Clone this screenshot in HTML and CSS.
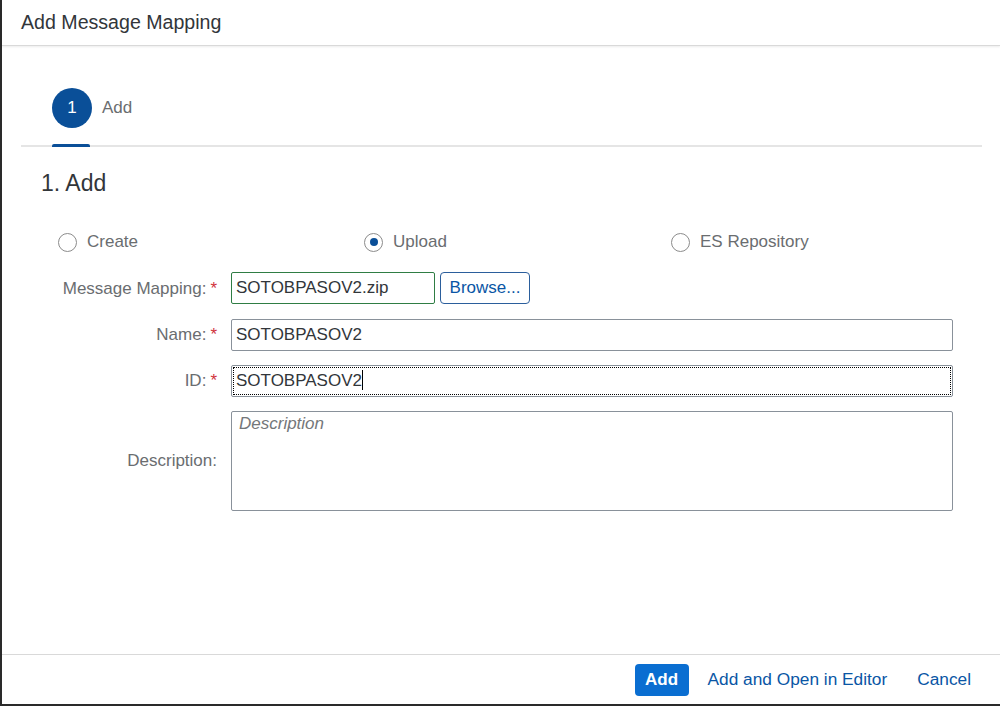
FILE: index.html
```html
<!DOCTYPE html>
<html>
<head>
<meta charset="utf-8">
<link rel="stylesheet" href="styles.css">
</head>
<body>
<div class="dialog">
  <header class="dlg-header">Add Message Mapping</header>
  <div class="dlg-content">
    <nav class="wizard-nav">
      <div class="step">
        <div class="step-top">
          <span class="step-circle">1</span>
          <span class="step-label">Add</span>
        </div>
        <span class="step-bar"></span>
      </div>
    </nav>
    <h2 class="step-title">1. Add</h2>
    <div class="radios">
      <label class="radio"><span class="rb"></span>Create</label>
      <label class="radio"><span class="rb checked"></span>Upload</label>
      <label class="radio"><span class="rb"></span>ES Repository</label>
    </div>
    <div class="form">
      <div class="lbl">Message Mapping:<span class="req">*</span></div>
      <div class="field file-row">
        <div class="input file-input">SOTOBPASOV2.zip</div>
        <button class="browse">Browse...</button>
      </div>
      <div class="lbl">Name:<span class="req">*</span></div>
      <div class="field"><div class="input">SOTOBPASOV2</div></div>
      <div class="lbl">ID:<span class="req">*</span></div>
      <div class="field"><div class="input focused">SOTOBPASOV2<span class="caret"></span></div></div>
      <div class="lbl lbl-desc">Description:</div>
      <div class="field"><div class="textarea">Description</div></div>
    </div>
  </div>
  <footer class="dlg-footer">
    <button class="btn-emph">Add</button>
    <button class="btn-link">Add and Open in Editor</button>
    <button class="btn-link">Cancel</button>
  </footer>
</div>
</body>
</html>
```
FILE: styles.css
```css
html, body {
  margin: 0;
  padding: 0;
}
body {
  background: #2a2a2a;
  width: 1000px;
  height: 706px;
  overflow: hidden;
  font-family: "Liberation Sans", Arial, sans-serif;
  color: #32363a;
}
.dialog {
  margin-left: 2px;
  width: 998px;
  height: 704px;
  background: #fff;
  display: flex;
  flex-direction: column;
}
.dlg-header {
  height: 45px;
  flex: none;
  padding-left: 19px;
  font-size: 19.6px;
  line-height: 44px;
  color: #32363a;
  border-bottom: 1px solid #d9d9d9;
  box-shadow: 0 1px 2px rgba(0,0,0,0.08);
}
.dlg-content {
  flex: 1;
  padding: 0 18px 0 19px;
}
.wizard-nav {
  height: 99px;
  border-bottom: 2px solid #e5e5e5;
  display: flex;
  align-items: flex-end;
}
.step {
  margin-left: 31px;
  display: flex;
  flex-direction: column;
}
.step-top {
  display: flex;
  align-items: center;
  gap: 10px;
}
.step-circle {
  width: 40px;
  height: 40px;
  border-radius: 50%;
  background: #0a4f98;
  color: #fff;
  font-size: 17px;
  display: flex;
  align-items: center;
  justify-content: center;
}
.step-label {
  font-size: 17px;
  color: #6a6d70;
}
.step-bar {
  margin-top: 16px;
  width: 38px;
  height: 3px;
  background: #0a4f98;
  border-radius: 2px 2px 0 0;
  margin-bottom: -2px;
}
.step-title {
  margin: 22px 0 0 20px;
  font-weight: normal;
  font-size: 23px;
  line-height: 28px;
  color: #32363a;
}
.radios {
  display: grid;
  grid-template-columns: 306px 307px auto;
  margin: 32px 0 0 37px;
  height: 26px;
}
.radio {
  display: flex;
  align-items: center;
  font-size: 17px;
  color: #6a6d70;
}
.rb {
  width: 19px;
  height: 19px;
  border: 1px solid #8c8c8c;
  border-radius: 50%;
  margin-right: 10px;
  box-sizing: border-box;
  display: flex;
  align-items: center;
  justify-content: center;
}
.rb.checked::after {
  content: "";
  width: 8px;
  height: 8px;
  border-radius: 50%;
  background: #0a4f98;
}
.form {
  margin-top: 17px;
  display: grid;
  grid-template-columns: 196px 722px;
  column-gap: 14px;
  row-gap: 14px;
}
.lbl {
  text-align: right;
  font-size: 17px;
  color: #6a6d70;
  align-self: center;
}
.req {
  color: #d0323d;
  margin-left: 4px;
}
.field {
  display: flex;
  gap: 5px;
}
.file-row {
  margin-bottom: 1px;
}
.input {
  flex: 1;
  height: 32px;
  box-sizing: border-box;
  border: 1px solid #89919a;
  border-radius: 2px;
  padding: 0 4px;
  font-size: 17px;
  line-height: 30px;
  color: #32363a;
  background: #fff;
}
.file-input {
  flex: none;
  width: 204px;
  border-color: #2f7d44;
}
.focused {
  outline: 1px dotted #000;
  outline-offset: -3px;
}
.caret {
  display: inline-block;
  width: 1px;
  height: 20px;
  background: #000;
  vertical-align: -4px;
}
.browse {
  height: 32px;
  width: 90px;
  border: 1px solid #2b5e9c;
  border-radius: 4px;
  background: #fff;
  color: #0a56a5;
  font-family: inherit;
  font-size: 17px;
  padding: 0;
}
.lbl-desc {
  align-self: center;
}
.textarea {
  flex: 1;
  height: 100px;
  box-sizing: border-box;
  border: 1px solid #89919a;
  border-radius: 2px;
  padding: 2px 7px;
  font-size: 17px;
  font-style: italic;
  color: #74777a;
}
.dlg-footer {
  flex: none;
  height: 49px;
  border-top: 1px solid #d9d9d9;
  display: flex;
  align-items: center;
  justify-content: flex-end;
  padding-right: 29px;
}
.btn-emph {
  height: 32px;
  width: 54px;
  border: none;
  border-radius: 4px;
  background: #0a6ed1;
  color: #fff;
  font-family: inherit;
  font-weight: bold;
  font-size: 17px;
  padding: 0;
  margin-right: 19px;
}
.btn-link {
  border: none;
  background: none;
  color: #0a56a5;
  font-family: inherit;
  font-size: 17.3px;
  padding: 0;
}
.btn-link + .btn-link {
  margin-left: 30px;
}
```
